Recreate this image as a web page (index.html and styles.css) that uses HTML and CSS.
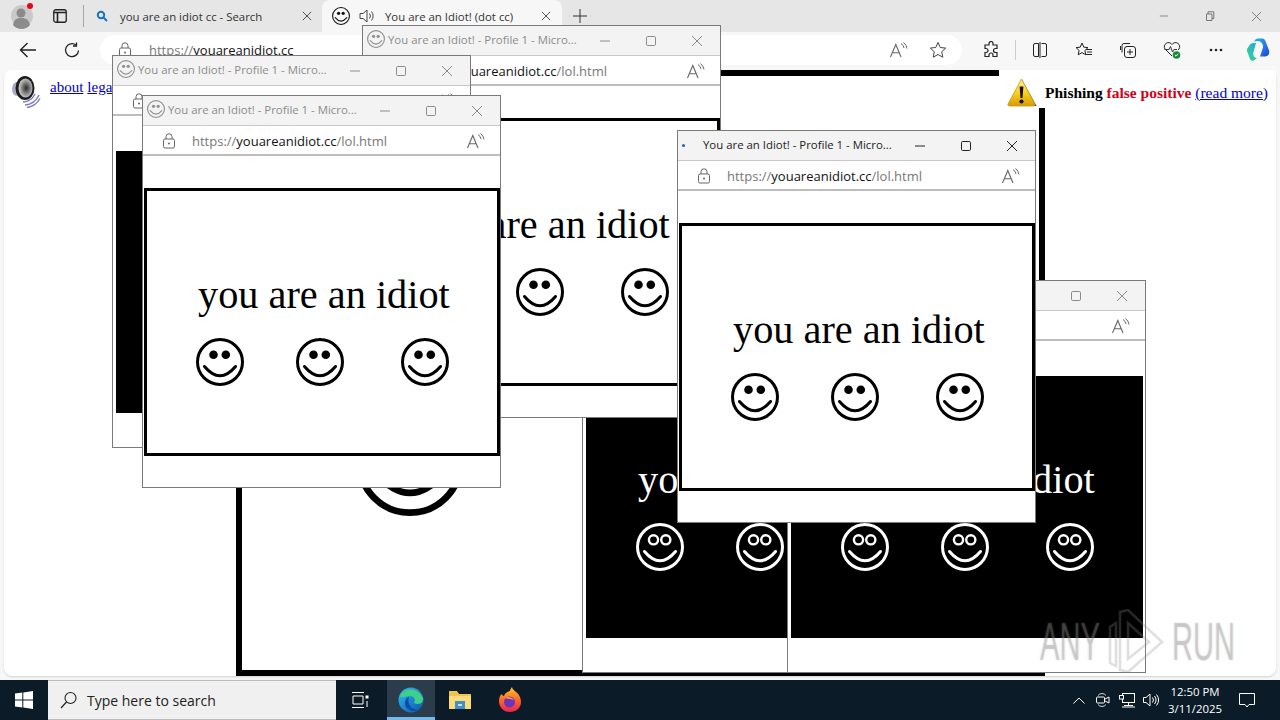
FILE: index.html
```html
<!DOCTYPE html>
<html lang="en">
<head>
    <meta charset="UTF-8">
    <title>You are an Idiot! (dot cc)</title>
    <link rel="stylesheet" href="styles.css">
</head>
<body>
    <svg class="defs" width="0" height="0">
        <symbol id="smile" viewBox="0 0 48 48">
            <circle cx="24" cy="24" r="22.500" fill="none" stroke="currentColor" stroke-width="3"/>
            <circle cx="17.500" cy="16.800" r="4.300" fill="currentColor"/>
            <circle cx="29.800" cy="16.800" r="4.300" fill="currentColor"/>
            <path d="M8.500 28.500 Q24 47 39.500 28.500" fill="none" stroke="currentColor" stroke-width="3" stroke-linecap="round"/>
        </symbol>
        <symbol id="smile-neg" viewBox="0 0 48 48">
            <circle cx="24" cy="24" r="22.500" fill="none" stroke="currentColor" stroke-width="3"/>
            <circle cx="17.500" cy="16.800" r="4.600" fill="none" stroke="currentColor" stroke-width="2.400"/>
            <circle cx="29.800" cy="16.800" r="4.600" fill="none" stroke="currentColor" stroke-width="2.400"/>
            <path d="M8.500 28.500 Q24 47 39.500 28.500" fill="none" stroke="currentColor" stroke-width="3" stroke-linecap="round"/>
        </symbol>
        <symbol id="lock" viewBox="0 0 16 16">
            <rect x="2.500" y="6" width="11" height="9" rx="1.500" fill="none" stroke="currentColor"/>
            <path d="M5 6V3.800a3 3 0 0 1 6 0V6" fill="none" stroke="currentColor"/>
            <circle cx="8" cy="10.500" r="1" fill="currentColor"/>
        </symbol>
        <symbol id="read" viewBox="0 0 20 16">
            <path d="M1.500 15 6.800 2.500 12 15M3.500 10.800h6.600" fill="none" stroke="currentColor" stroke-width="1.100"/>
            <path d="M12 1.500q2.600 1.600 3 4.500M14.500 .5q3 2.200 3.500 6" fill="none" stroke="currentColor"/>
        </symbol>
        <symbol id="min" viewBox="0 0 12 12"><path d="M1 6h10" stroke="currentColor" fill="none"/></symbol>
        <symbol id="max" viewBox="0 0 12 12"><rect x="1.500" y="1.500" width="9" height="9" rx="1.200" stroke="currentColor" fill="none"/></symbol>
        <symbol id="close" viewBox="0 0 12 12"><path d="M1 1l10 10M11 1 1 11" stroke="currentColor" fill="none"/></symbol>
    </svg>

    <div class="browser">
        <div class="tabstrip">
            <div class="avatar">
                <svg width="24" height="28" viewBox="0 0 24 28"><circle cx="12" cy="14" r="11" fill="#c9c9c9"/><circle cx="11" cy="11" r="4.500" fill="#8b8b8b"/><path d="M3 23c1-6 4-7 8-7s8 1 9 7a11 11 0 0 1-17 0z" fill="#8b8b8b"/><circle cx="20" cy="4" r="3" fill="#e3061a"/></svg>
            </div>
            <svg class="tab-actions" width="14" height="14" viewBox="0 0 14 14"><rect x=".75" y=".75" width="12.500" height="12.500" rx="2" fill="none" stroke="#222" stroke-width="1.300"/><path d="M1 3.500h12M4.500 3.500V13" stroke="#222" stroke-width="1.600" fill="none"/></svg>
            <span class="tab-sep"></span>
            <div class="tab">
                <svg class="tab-search" width="12" height="12" viewBox="0 0 12 12"><circle cx="5" cy="5" r="3.200" fill="none" stroke="#1a73c9" stroke-width="2"/><path d="M7.500 7.500 11 11" stroke="#1a73c9" stroke-width="2"/></svg>
                <span class="tab-text">you are an idiot cc - Search</span>
                <svg class="tab-close" width="10" height="10"><use href="#close"/></svg>
            </div>
            <div class="tab tab-active">
                <svg class="tab-face" width="18" height="18"><use href="#smile"/></svg>
                <svg class="tab-sound" width="16" height="16" viewBox="0 0 16 16"><path d="M1 5.500h3L8 2v12l-4-3.500H1z" fill="none" stroke="#333" stroke-width=".9"/><path d="M10.500 5.500a4 4 0 0 1 0 5M12.500 3.500a7 7 0 0 1 0 9" fill="none" stroke="#333" stroke-width=".9"/></svg>
                <span class="tab-text">You are an Idiot! (dot cc)</span>
                <svg class="tab-close" width="10" height="10"><use href="#close"/></svg>
            </div>
            <svg class="tab-new" width="14" height="14" viewBox="0 0 14 14"><path d="M7 0v14M0 7h14" stroke="#333" fill="none"/></svg>
            <div class="win-controls">
                <svg width="10" height="10"><use href="#min"/></svg>
                <svg width="10" height="10" viewBox="0 0 10 10"><path d="M1.500 3h5.500v6.500H1.500zM3 3V.8h5.800V7.500H7" fill="none" stroke="currentColor"/></svg>
                <svg width="11" height="11"><use href="#close"/></svg>
            </div>
        </div>

        <div class="toolbar">
            <svg class="nav-back" width="18" height="16" viewBox="0 0 18 16"><path d="M17 8H1.500M8.500 1 1.500 8l7 7" fill="none" stroke="#222" stroke-width="1.400"/></svg>
            <svg class="nav-reload" width="16" height="16" viewBox="0 0 16 16"><path d="M14.500 8.500A6.500 6.500 0 1 1 12 3" fill="none" stroke="#222" stroke-width="1.300"/><path d="M12.500 .5V4H9" fill="none" stroke="#222" stroke-width="1.300"/></svg>
            <div class="address">
                <svg class="address-lock" width="16" height="16"><use href="#lock"/></svg>
                <span class="address-url">https://<b>youareanidiot.cc</b></span>
                <svg class="address-read" width="20" height="16"><use href="#read"/></svg>
                <svg class="address-star" width="18" height="18" viewBox="0 0 18 18"><path d="M9 1.500 11.300 6.500l5.400.6-4 3.700 1.100 5.400L9 13.500l-4.800 2.700 1.100-5.400-4-3.700 5.400-.6z" fill="none" stroke="#444"/></svg>
            </div>
            <div class="tools">
                <svg class="tool-ext" width="18" height="18" viewBox="0 0 18 18"><path d="M7 2.500a2 2 0 0 1 4 0V4h4v3.500h-1.500a2 2 0 0 0 0 4H15V15.500h-4V14a2 2 0 0 0-4 0v1.500H3V11.500h1a2 2 0 0 0 0-4H3V4h4z" fill="none" stroke="#222" stroke-width="1.200"/></svg>
                <span class="tool-sep"></span>
                <svg class="tool-split" width="16" height="16" viewBox="0 0 16 16"><path d="M6.500 1.500H3a1.500 1.500 0 0 0-1.500 1.500v10A1.500 1.500 0 0 0 3 14.500h3.500zM8 0v16M9.500 1.500H13A1.500 1.500 0 0 1 14.500 3v10a1.500 1.500 0 0 1-1.500 1.500H9.500" fill="none" stroke="#222"/></svg>
                <svg class="tool-fav" width="18" height="18" viewBox="0 0 18 18"><path d="M7 2 8.800 6.200l4.200.4-3.100 2.900.9 4.300L7 11.600l-3.800 2.200.9-4.300L1 6.600l4.200-.4zM11 8.500h6M12 11h5M11 13.500h6" fill="none" stroke="#222"/></svg>
                <svg class="tool-coll" width="18" height="18" viewBox="0 0 18 18"><path d="M3 11.500V4.500a2 2 0 0 1 2-2h6M1.500 9V5" fill="none" stroke="#222"/><rect x="5.500" y="5.500" width="11" height="11" rx="2.500" fill="none" stroke="#222"/><path d="M11 8v6M8 11h6" stroke="#222" fill="none"/></svg>
                <svg class="tool-health" width="20" height="20" viewBox="0 0 20 20"><path d="M10 16 3 9a4 4 0 0 1 7-4.500A4 4 0 0 1 17 9l-1 1" fill="none" stroke="#222"/><path d="M2.500 9.500H7L8.500 6.500 10.500 12 12 9.500h3" fill="none" stroke="#222" stroke-width=".9"/><circle cx="14.500" cy="15" r="3.800" fill="#1c8a3c"/><path d="M12.800 15l1.200 1.200 2.200-2.400" stroke="#fff" fill="none"/></svg>
                <svg class="tool-more" width="14" height="4" viewBox="0 0 14 4"><circle cx="2" cy="2" r="1.300" fill="#222"/><circle cx="7" cy="2" r="1.300" fill="#222"/><circle cx="12" cy="2" r="1.300" fill="#222"/></svg>
                <svg class="tool-copilot" width="24" height="24" viewBox="0 0 24 24"><defs><linearGradient id="cp" x1="0" y1="0" x2="1" y2="1"><stop offset="0" stop-color="#19c3c8"/><stop offset=".5" stop-color="#2a7bf0"/><stop offset="1" stop-color="#1a45c8"/></linearGradient><linearGradient id="cq" x1="0" y1="1" x2="1" y2="0"><stop offset="0" stop-color="#3fd68a"/><stop offset="1" stop-color="#19a8e0"/></linearGradient></defs><path d="M8 3.500C9 1 11 .5 13 .5h3c2.500 0 3 1.500 4 4l3 8c1 3-1 6-4 6h-5l3-9C17.500 6 15 3 12 3z" fill="url(#cp)"/><path d="M3 8C4 5.500 6 5 9 5h1L7.500 14c-1 3.500 1 6 4 6.500h-1C7 23.500 5 23.500 4 21L1 13c-.5-2 1-3.500 2-5z" fill="url(#cq)"/></svg>
            </div>
        </div>

        <div class="page">
            <div class="page-head">
                <div class="head-left">
                    <svg width="32" height="32" viewBox="0 0 32 32"><defs><radialGradient id="cone" cx=".55" cy=".5" r=".6"><stop offset="0" stop-color="#2a2a2a"/><stop offset=".55" stop-color="#8e8e8e"/><stop offset="1" stop-color="#e2e2e2"/></radialGradient></defs><path d="M13 26a14 14 0 0 0 12-8M15 29a17 17 0 0 0 14-10M17 31.500a18 18 0 0 0 13-9" fill="none" stroke="#7f7dc4" stroke-width="1.500"/><ellipse cx="7" cy="13" rx="5" ry="7" fill="#a9a9c4"/><ellipse cx="15" cy="12" rx="9.500" ry="12" fill="#1d1d1d"/><ellipse cx="15.500" cy="12" rx="7" ry="9.500" fill="url(#cone)"/></svg>
                    <a href="#">about</a> <a href="#">legal</a>
                </div>
                <div class="head-right">
                    <svg width="30" height="30" viewBox="0 0 30 30"><defs><linearGradient id="warn" x1="0" y1="0" x2="0" y2="1"><stop offset="0" stop-color="#fff2a0"/><stop offset=".5" stop-color="#f8d21e"/><stop offset="1" stop-color="#d79a08"/></linearGradient></defs><path d="M15 2 29.500 28H4z" fill="#1c1c6e"/><path d="M14.500 1 28 26a1.500 1.500 0 0 1-1.300 2H2.300A1.500 1.500 0 0 1 1 26z" fill="url(#warn)" stroke="#c99a10" stroke-width=".8"/><path d="M12.600 8.500h3.800l-.9 11.500h-2z" fill="#1a1208"/><circle cx="14.500" cy="23.500" r="2.100" fill="#1a1208"/></svg>
                    <span class="phish">Phishing <em>false positive</em> <a href="#">(read more)</a></span>
                </div>
            </div>

            <div class="big-box">
                <svg class="big-face" width="108" height="108"><use href="#smile"/></svg>
            </div>

            <div class="popup pos-f">
                <div class="popup-title">
                    <svg class="popup-fav" width="18" height="18"><use href="#smile"/></svg>
                    <span class="popup-name">You are an Idiot! - Profile 1 - Micro...</span>
                    <svg class="ctl-min" width="12" height="12"><use href="#min"/></svg>
                    <svg class="ctl-max" width="12" height="12"><use href="#max"/></svg>
                    <svg class="ctl-close" width="12" height="12"><use href="#close"/></svg>
                </div>
                <div class="popup-url">
                    <svg class="popup-lock" width="16" height="16"><use href="#lock"/></svg>
                    <span class="popup-addr">https://<b>youareanidiot.cc</b>/lol.html</span>
                    <svg class="popup-read" width="20" height="16"><use href="#read"/></svg>
                </div>
                <div class="idiot idiot-neg">
                    <p>you are an idiot</p>
                    <div class="faces">
                        <svg width="48" height="48"><use href="#smile-neg"/></svg>
                        <svg width="48" height="48"><use href="#smile-neg"/></svg>
                        <svg width="48" height="48"><use href="#smile-neg"/></svg>
                    </div>
                </div>
            </div>

            <div class="popup pos-e">
                <div class="popup-title">
                    <svg class="popup-fav" width="18" height="18"><use href="#smile"/></svg>
                    <span class="popup-name">You are an Idiot! - Profile 1 - Micro...</span>
                    <svg class="ctl-min" width="12" height="12"><use href="#min"/></svg>
                    <svg class="ctl-max" width="12" height="12"><use href="#max"/></svg>
                    <svg class="ctl-close" width="12" height="12"><use href="#close"/></svg>
                </div>
                <div class="popup-url">
                    <svg class="popup-lock" width="16" height="16"><use href="#lock"/></svg>
                    <span class="popup-addr">https://<b>youareanidiot.cc</b>/lol.html</span>
                    <svg class="popup-read" width="20" height="16"><use href="#read"/></svg>
                </div>
                <div class="idiot idiot-neg">
                    <p>you are an idiot</p>
                    <div class="faces">
                        <svg width="48" height="48"><use href="#smile-neg"/></svg>
                        <svg width="48" height="48"><use href="#smile-neg"/></svg>
                        <svg width="48" height="48"><use href="#smile-neg"/></svg>
                    </div>
                </div>
            </div>

            <div class="popup pos-c">
                <div class="popup-title">
                    <svg class="popup-fav" width="18" height="18"><use href="#smile"/></svg>
                    <span class="popup-name">You are an Idiot! - Profile 1 - Micro...</span>
                    <svg class="ctl-min" width="12" height="12"><use href="#min"/></svg>
                    <svg class="ctl-max" width="12" height="12"><use href="#max"/></svg>
                    <svg class="ctl-close" width="12" height="12"><use href="#close"/></svg>
                </div>
                <div class="popup-url">
                    <svg class="popup-lock" width="16" height="16"><use href="#lock"/></svg>
                    <span class="popup-addr">https://<b>youareanidiot.cc</b>/lol.html</span>
                    <svg class="popup-read" width="20" height="16"><use href="#read"/></svg>
                </div>
                <div class="idiot">
                    <p>you are an idiot</p>
                    <div class="faces">
                        <svg width="48" height="48"><use href="#smile"/></svg>
                        <svg width="48" height="48"><use href="#smile"/></svg>
                        <svg width="48" height="48"><use href="#smile"/></svg>
                    </div>
                </div>
            </div>

            <div class="popup pos-a">
                <div class="popup-title">
                    <svg class="popup-fav" width="18" height="18"><use href="#smile"/></svg>
                    <span class="popup-name">You are an Idiot! - Profile 1 - Micro...</span>
                    <svg class="ctl-min" width="12" height="12"><use href="#min"/></svg>
                    <svg class="ctl-max" width="12" height="12"><use href="#max"/></svg>
                    <svg class="ctl-close" width="12" height="12"><use href="#close"/></svg>
                </div>
                <div class="popup-url">
                    <svg class="popup-lock" width="16" height="16"><use href="#lock"/></svg>
                    <span class="popup-addr">https://<b>youareanidiot.cc</b>/lol.html</span>
                    <svg class="popup-read" width="20" height="16"><use href="#read"/></svg>
                </div>
                <div class="idiot idiot-neg">
                    <p>you are an idiot</p>
                </div>
            </div>

            <div class="popup pos-b">
                <div class="popup-title">
                    <svg class="popup-fav" width="18" height="18"><use href="#smile"/></svg>
                    <span class="popup-name">You are an Idiot! - Profile 1 - Micro...</span>
                    <svg class="ctl-min" width="12" height="12"><use href="#min"/></svg>
                    <svg class="ctl-max" width="12" height="12"><use href="#max"/></svg>
                    <svg class="ctl-close" width="12" height="12"><use href="#close"/></svg>
                </div>
                <div class="popup-url">
                    <svg class="popup-lock" width="16" height="16"><use href="#lock"/></svg>
                    <span class="popup-addr">https://<b>youareanidiot.cc</b>/lol.html</span>
                    <svg class="popup-read" width="20" height="16"><use href="#read"/></svg>
                </div>
                <div class="idiot">
                    <p>you are an idiot</p>
                    <div class="faces">
                        <svg width="48" height="48"><use href="#smile"/></svg>
                        <svg width="48" height="48"><use href="#smile"/></svg>
                        <svg width="48" height="48"><use href="#smile"/></svg>
                    </div>
                </div>
            </div>

            <div class="popup pos-g popup-active">
                <div class="popup-title">
                    <span class="popup-dot"></span>
                    <span class="popup-name">You are an Idiot! - Profile 1 - Micro...</span>
                    <svg class="ctl-min" width="12" height="12"><use href="#min"/></svg>
                    <svg class="ctl-max" width="12" height="12"><use href="#max"/></svg>
                    <svg class="ctl-close" width="12" height="12"><use href="#close"/></svg>
                </div>
                <div class="popup-url">
                    <svg class="popup-lock" width="16" height="16"><use href="#lock"/></svg>
                    <span class="popup-addr">https://<b>youareanidiot.cc</b>/lol.html</span>
                    <svg class="popup-read" width="20" height="16"><use href="#read"/></svg>
                </div>
                <div class="idiot">
                    <p>you are an idiot</p>
                    <div class="faces">
                        <svg width="48" height="48"><use href="#smile"/></svg>
                        <svg width="48" height="48"><use href="#smile"/></svg>
                        <svg width="48" height="48"><use href="#smile"/></svg>
                    </div>
                </div>
            </div>

            <div class="watermark">
                <span>ANY</span>
                <svg width="56" height="64" viewBox="0 0 56 64"><path d="M2 18v36l6 3V14zM12 3v58l8 2 34-30L20 1zM20 14v36l21-17z" fill="none" stroke="currentColor" stroke-width="2.500"/></svg>
                <span>RUN</span>
            </div>
        </div>
    </div>

    <div class="taskbar">
        <div class="start">
            <svg width="18" height="18" viewBox="0 0 18 18"><path d="M0 2.600 7.300 1.500v7H0zM8.300 1.400 18 0v8.500H8.300zM0 9.500h7.300v7L0 15.400zM8.300 9.500H18V18L8.300 16.600z" fill="#fff"/></svg>
        </div>
        <div class="search">
            <svg width="18" height="18" viewBox="0 0 18 18"><circle cx="10.500" cy="7" r="5.500" fill="none" stroke="#222" stroke-width="1.100"/><path d="M6.500 11 1 17" stroke="#222" stroke-width="1.200"/></svg>
            <span>Type here to search</span>
        </div>
        <div class="task-btn task-view">
            <svg width="18" height="16" viewBox="0 0 18 16"><path d="M1 .5h12M1 15.500h12M2 4h10v8H2z" fill="none" stroke="#fff"/><rect x="14.500" y="3.500" width="3" height="3" fill="#fff"/><path d="M16 9v6" stroke="#fff"/></svg>
        </div>
        <div class="task-btn task-edge">
            <svg width="26" height="26" viewBox="0 0 26 26"><defs><linearGradient id="eg" x1="0" y1="0" x2="1" y2="1"><stop offset="0" stop-color="#35c1f1"/><stop offset=".6" stop-color="#1a7ad0"/><stop offset="1" stop-color="#0c59a4"/></linearGradient></defs><circle cx="13" cy="13" r="12.500" fill="url(#eg)"/><path d="M2 9C5 1 20-1 25 11c.5 3-1 6-5 6-3 0-4-1-4-2 2-2 0-6-4-6-5 0-8 3-10 0z" fill="#3ed08a"/><path d="M11 10c-4 1-5 6-3 10 2 3 7 5.500 12 3-7-.5-11-6-9-13z" fill="#0b4f9c"/></svg>
        </div>
        <div class="task-btn task-files">
            <svg width="24" height="22" viewBox="0 0 24 22"><path d="M1 2h8l2 3h12v15H1z" fill="#f0c34e"/><path d="M1 7h22v13H1z" fill="#fbdc7a"/><path d="M7 12h10v8H7z" fill="#3f8fc9"/><path d="M10 15h4v2h-4z" fill="#bfe0f5"/></svg>
        </div>
        <div class="task-btn task-fox">
            <svg width="24" height="26" viewBox="0 0 24 26"><defs><linearGradient id="fx" x1="0" y1="0" x2="0" y2="1"><stop offset="0" stop-color="#ffcb2e"/><stop offset=".5" stop-color="#ff6a2b"/><stop offset="1" stop-color="#e8234f"/></linearGradient></defs><path d="M12 25C5 25 1 20 1 14c0-3 1-6 3-7 0 1 1 2 2 2 1-3 3-4 6-5 0-1 1-3 2-4 0 2 2 3 4 5 3 2 5 6 5 10 0 6-5 10-11 10z" fill="url(#fx)"/><circle cx="11.500" cy="15" r="5.500" fill="#6a35b8"/><path d="M7 11c3-2 7-1 9 2-3-1-6-1-9-2z" fill="#f9953a"/></svg>
        </div>
        <div class="tray">
            <svg class="tray-up" width="12" height="7" viewBox="0 0 12 7"><path d="M.5 6.500 6 1l5.500 5.500" fill="none" stroke="#fff"/></svg>
            <svg width="14" height="16" viewBox="0 0 14 16"><path d="M2 3.500a5 5 0 0 1 8 0M2 12.500a5 5 0 0 0 8 0" fill="none" stroke="#fff" stroke-width=".8"/><rect x=".5" y="5" width="8" height="6" rx="1" fill="none" stroke="#fff"/><path d="M9 7l4-2v6l-4-2" fill="none" stroke="#fff"/></svg>
            <svg width="16" height="15" viewBox="0 0 16 15"><rect x="3.500" y=".5" width="12" height="9" fill="none" stroke="#fff"/><rect x=".5" y="2.500" width="4" height="3.500" fill="#0b1b28" stroke="#fff"/><path d="M9.500 9.500v3M3 14h13M5 12.500h9" fill="none" stroke="#fff"/></svg>
            <svg class="tray-vol" width="16" height="14" viewBox="0 0 16 14"><path d="M.5 4.500h2.500L7 1v12L3 9.500H.5z" fill="none" stroke="#fff"/><path d="M9.500 4.500a4 4 0 0 1 0 5M11.500 3a6.500 6.500 0 0 1 0 8M13.500 1.500a9 9 0 0 1 0 11" fill="none" stroke="#fff"/></svg>
        </div>
        <div class="clock">
            <span>12:50 PM</span>
            <span>3/11/2025</span>
        </div>
        <svg class="notify" width="16" height="15" viewBox="0 0 16 15"><path d="M.5.500h15v11H10l-2 2.500-2-2.500H.5z" fill="none" stroke="#fff"/></svg>
    </div>
</body>
</html>
```

FILE: styles.css
```css
* {
    box-sizing: border-box;
}
html, body {
    margin: 0;
    height: 720px;
    overflow: hidden;
}
body {
    font-family: "Open Sans", "Noto Sans", sans-serif;
    background: #f7f7f7;
    display: flex;
    flex-direction: column;
}
.defs {
    position: absolute;
}
svg {
    display: block;
    flex: none;
}

/* browser frame */
.browser {
    height: 680px;
    display: flex;
    flex-direction: column;
}
.tabstrip {
    height: 32px;
    background: #e6e6e6;
    display: flex;
    align-items: center;
    position: relative;
}
.avatar {
    margin-left: 10px;
}
.tab-actions {
    margin-left: 19px;
}
.tab-sep {
    width: 1px;
    height: 22px;
    background: #a8a8a8;
    margin-left: 16px;
}
.tab {
    display: flex;
    align-items: center;
    height: 32px;
    width: 238px;
    font-size: 11.4px;
    color: #333;
    position: relative;
    flex: none;
}
.tab .tab-search {
    margin-left: 12px;
}
.tab-text {
    margin-left: 12px;
    white-space: nowrap;
}
.tab-close {
    position: absolute;
    right: 10px;
    top: 11px;
    color: #333;
}
.tab-active {
    background: #f7f7f7;
    height: 32px;
    width: 240px;
    border-radius: 8px 8px 0 0;
}
.tab-active .tab-close {
    right: 11px;
}
.tab-face {
    margin-left: 10px;
    color: #111;
}
.tab-sound {
    margin-left: 9px;
}
.tab-active .tab-text {
    margin-left: 10px;
}
.tab-new {
    margin-left: 11px;
}
.win-controls {
    margin-left: auto;
    display: flex;
    align-items: center;
    gap: 36px;
    padding-right: 18px;
    color: #777;
}

.toolbar {
    height: 38px;
    background: #f7f7f7;
    display: flex;
    align-items: center;
    padding-bottom: 2px;
}
.nav-back {
    margin-left: 19px;
}
.nav-reload {
    margin-left: 27px;
}
.address {
    margin-left: 20px;
    width: 862px;
    height: 30px;
    background: #fff;
    border-radius: 15px;
    display: flex;
    align-items: center;
    flex: none;
    color: #666;
}
.address-lock {
    margin-left: 17px;
}
.address-url {
    margin-left: 16px;
    font-size: 13px;
    color: #777;
}
.address-url b, .popup-addr b {
    font-weight: 400;
    color: #111;
}
.address-read {
    margin-left: auto;
}
.address-star {
    margin-left: 20px;
    margin-right: 15px;
}
.tools {
    display: flex;
    align-items: center;
}
.tool-ext {
    margin-left: 20px;
}
.tool-sep {
    width: 1px;
    height: 20px;
    background: #ccc;
    margin-left: 15px;
}
.tool-split {
    margin-left: 16px;
}
.tool-fav {
    margin-left: 27px;
}
.tool-coll {
    margin-left: 26px;
}
.tool-health {
    margin-left: 25px;
}
.tool-more {
    margin-left: 27px;
}
.tool-copilot {
    margin-left: 23px;
}

/* page area, the popups sit on it like windows on a desktop */
.page {
    position: relative;
    flex: 1;
    margin: 0 4px 4px;
    background: #fff;
    border-radius: 8px;
    box-shadow: 0 1px 2px rgba(0,0,0,0.15);
    font-family: "Liberation Serif", serif;
}
.page-head {
    height: 38px;
    display: flex;
    justify-content: space-between;
}
.head-left {
    display: flex;
    align-items: center;
    gap: 4px;
    padding: 6px 0 0 6px;
    font-size: 15px;
    height: 38px;
}
.head-left a {
    margin-top: -10px;
}
.head-left svg {
    margin-right: 4px;
}
a {
    color: #00c;
}
.head-right {
    position: relative;
    z-index: 1;
    display: flex;
    align-items: center;
    background: #fff;
    padding: 8px 0 0 8px;
    width: 277px;
    height: 38px;
    gap: 8px;
}
.phish {
    font-size: 15.5px;
    font-weight: 700;
    white-space: nowrap;
    margin-top: -1px;
}
.phish em {
    font-style: normal;
    color: #d0021b;
}
.phish a {
    font-weight: 400;
}
.big-box {
    position: absolute;
    left: 232px;
    top: 0;
    width: 809px;
    height: 606px;
    border: 6px solid #000;
}
.big-face {
    position: absolute;
    left: 114px;
    top: 332px;
    color: #000;
}

/* popup window */
.popup {
    position: absolute;
    width: 359px;
    height: 393px;
    background: #fff;
    border: 1px solid #7a7a7a;
    font-family: "Open Sans", "Noto Sans", sans-serif;
}
.pos-a { left: 108px; top: -15px; }
.pos-b { left: 138px; top: 25px; }
.pos-c { left: 358px; top: -45px; }
.pos-e { left: 783px; top: 210px; }
.pos-f { left: 578px; top: 210px; }
.pos-g { left: 673px; top: 60px; }
.popup-title {
    height: 30px;
    background: #f3f3f3;
    border-bottom: 1px solid #c8c8c8;
    display: flex;
    align-items: center;
    position: relative;
    color: #8c8c8c;
    font-size: 11.4px;
}
.popup-active .popup-title {
    color: #222;
}
.popup-fav {
    position: absolute;
    left: 4px;
    top: 4px;
    color: #909090;
}
.popup-dot {
    position: absolute;
    left: 4px;
    top: 13px;
    width: 3px;
    height: 3px;
    border-radius: 50%;
    background: #1a5fb4;
}
.popup-name {
    margin: 0 0 2px 25px;
    white-space: nowrap;
}
.ctl-min, .ctl-max, .ctl-close {
    position: absolute;
    top: 9px;
}
.ctl-min { left: 236px; }
.ctl-max { left: 282px; }
.ctl-close { left: 328px; }
.popup-url {
    height: 30px;
    padding-top: 2px;
    border-bottom: 2px solid #bdbdbd;
    display: flex;
    align-items: center;
    color: #666;
    background: #fff;
}
.popup-lock {
    margin-left: 18px;
}
.popup-addr {
    margin-left: 15px;
    font-size: 13px;
    color: #777;
}
.popup-read {
    margin-left: auto;
    margin-right: 14px;
}
.idiot {
    margin: 32px 0 0 1px;
    width: 356px;
    height: 268px;
    background: #fff;
    border: 3px solid #000;
    color: #000;
    font-family: "Liberation Serif", serif;
    padding: 81px 0 0 51px;
}
.idiot p {
    margin: 0;
    font-size: 40.3px;
    line-height: 46px;
    white-space: nowrap;
}
.idiot-neg {
    background: #000;
    border-color: #fff;
    border-width: 3px 2px;
    color: #fff;
    padding: 81px 0 0 52px;
}
.faces {
    display: flex;
    margin: 20px 0 0 -2px;
    gap: 52px;
}
.faces svg:last-child {
    margin-left: 5px;
}

.watermark {
    position: absolute;
    left: 1036px;
    top: 536px;
    display: flex;
    align-items: center;
    gap: 8px;
    color: rgba(140,140,140,0.28);
    font-family: "Liberation Sans", sans-serif;
    font-size: 53px;
    z-index: 5;
    height: 70px;
}
.watermark span {
    display: block;
    width: 60px;
    transform: scaleX(0.55);
    transform-origin: left center;
    text-shadow: 0 0 3px rgba(140,140,140,0.3);
}

/* taskbar */
.taskbar {
    height: 40px;
    background: #0b1b28;
    display: flex;
    align-items: center;
    color: #fff;
}
.start {
    width: 48px;
    display: flex;
    justify-content: center;
}
.search {
    width: 288px;
    height: 40px;
    background: #f0f0f0;
    border: 1px solid #b8bcc0;
    border-width: 1px 0;
    color: #222;
    display: flex;
    align-items: center;
    font-size: 14px;
    padding-left: 12px;
    gap: 9px;
}
.task-btn {
    height: 40px;
    display: flex;
    align-items: center;
    justify-content: center;
}
.task-view {
    width: 51px;
    padding-right: 4px;
}
.task-edge {
    width: 48px;
    background: #2b3d4a;
    border-bottom: 3px solid #76b9ed;
    padding-top: 2px;
}
.task-files {
    width: 50px;
}
.task-fox {
    width: 50px;
}
.tray {
    margin-left: auto;
    display: flex;
    align-items: center;
    gap: 9px;
}
.tray-up {
    margin-right: 2px;
}
.tray-vol {
    margin-left: -1px;
}
.clock {
    margin-left: 1px;
    width: 70px;
    text-align: center;
    font-size: 11.4px;
    line-height: 17px;
    display: flex;
    flex-direction: column;
}
.notify {
    margin: 0 25px 0 9px;
}
```
